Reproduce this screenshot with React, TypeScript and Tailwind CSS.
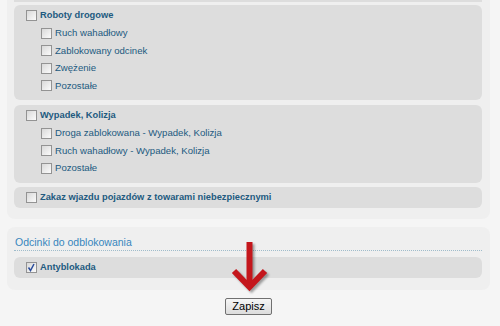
import React from "react"

interface Item {
  label: string
  checked?: boolean
}

interface Group {
  label: string
  checked?: boolean
  items: Item[]
  mt: string
  pb: string
}

const GROUPS: Group[] = [
  {
    label: "Roboty drogowe",
    mt: "mt-[3px]",
    pb: "pb-[5.5px]",
    items: [
      { label: "Ruch wahadłowy" },
      { label: "Zablokowany odcinek" },
      { label: "Zwężenie" },
      { label: "Pozostałe" },
    ],
  },
  {
    label: "Wypadek, Kolizja",
    mt: "mt-[5px]",
    pb: "pb-[6px]",
    items: [
      { label: "Droga zablokowana - Wypadek, Kolizja" },
      { label: "Ruch wahadłowy - Wypadek, Kolizja" },
      { label: "Pozostałe" },
    ],
  },
  {
    label: "Zakaz wjazdu pojazdów z towarami niebezpiecznymi",
    mt: "mt-[4px]",
    pb: "pb-[1.5px]",
    items: [],
  },
]

function Checkbox({ checked }: { checked?: boolean }) {
  return (
    <span className="relative w-[11px] h-[11px] flex-shrink-0 border border-[#939393] bg-gradient-to-br from-[#d9d9d9] to-[#fbfbfb]">
      {checked && (
        <svg viewBox="0 0 11 11" className="absolute -left-[1px] -top-[1px] w-[11px] h-[11px]">
          <path d="M2.5 5.5 L4.5 8.5 L8 2" fill="none" stroke="#2a4c9c" strokeWidth="1.5" />
        </svg>
      )}
    </span>
  )
}

function Row({ label, checked, sub }: { label: string; checked?: boolean; sub?: boolean }) {
  return (
    <div className={`flex items-center h-[17.5px] ${sub ? "pl-[27px]" : "pl-[12px]"}`}>
      <Checkbox checked={checked} />
      <span
        className={`ml-[3px] whitespace-nowrap text-[#225a80] ${
          sub ? "text-[9.6px]" : "text-[9.3px] font-bold"
        }`}
      >
        {label}
      </span>
    </div>
  )
}

export default function App() {
  return (
    <div className="relative w-[500px] h-[326px] overflow-hidden bg-[#f5f5f5] font-['Liberation_Sans',Arial,sans-serif]">
      {/* Powody blokady */}
      <div className="mx-[7px] w-[483px] bg-[#efefef] rounded-b-[8px] pl-[7px] pr-[8px] pb-[11px]">
        <div className="h-[2px] bg-[#dddddd]" />
        {GROUPS.map((g) => (
          <div key={g.label} className={`${g.mt} ${g.pb} pt-[2px] bg-[#dddddd] rounded-[6px]`}>
            <Row label={g.label} checked={g.checked} />
            {g.items.map((it) => (
              <Row key={it.label} label={it.label} checked={it.checked} sub />
            ))}
          </div>
        ))}
      </div>

      {/* Odcinki do odblokowania */}
      <div className="mt-[8px] mx-[7px] w-[483px] bg-[#efefef] rounded-[8px] pl-[7px] pr-[8px] pt-[8px] pb-[12px]">
        <div className="h-[16px] pl-[1px] flex items-center text-[10.5px] text-[#3786bd] border-b border-dotted border-[#9fbccb]">
          Odcinki do odblokowania
        </div>
        <div className="mt-[6px] pt-[2px] pb-[1.5px] bg-[#dddddd] rounded-[6px]">
          <Row label="Antyblokada" checked />
        </div>
      </div>

      <div className="mx-[7px] w-[483px] mt-[8px] flex justify-center">
        <button className="w-[47px] h-[17px] flex items-center justify-center rounded-[2px] border border-[#707070] bg-gradient-to-b from-[#f6f6f6] to-[#dcdcdc] text-[11px] text-black leading-none">
          Zapisz
        </button>
      </div>

      {/* strzałka */}
      <svg
        viewBox="0 0 44 60"
        className="absolute left-[227px] top-[238px] w-[44px] h-[60px] drop-shadow-[2px_2px_1px_rgba(0,0,0,0.35)]"
      >
        <path d="M22.5 4 L22.5 50" stroke="#c4161c" strokeWidth="6" fill="none" />
        <path d="M7 33 L22.5 49 L38 33" stroke="#c4161c" strokeWidth="6" fill="none" strokeLinejoin="miter" />
      </svg>
    </div>
  )
}
